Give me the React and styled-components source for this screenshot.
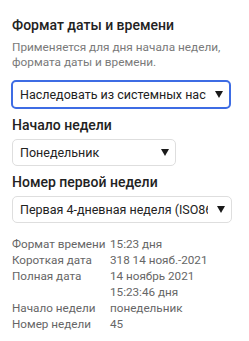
import React from "react";
import styled, { createGlobalStyle } from "styled-components";

const Global = createGlobalStyle`
    body {
        margin: 0;
        background: #ffffff;
        font-family: Roboto, "Open Sans", sans-serif;
    }
`

const Panel = styled.div`
    display: flex;
    flex-direction: column;
    padding: 16px 17px 0 12px;
    width: 249px;
    box-sizing: border-box;
`
const Title = styled.div`
    font-size: 14px;
    font-weight: 500;
    color: #222;
    line-height: 18px;
    margin-top: ${props => props.top || 0}px;
`
const Desc = styled.div`
    font-size: 11.8px;
    color: #7a7a7a;
    line-height: 14.5px;
    margin-top: 6px;
`
const Select = styled.div`
    display: flex;
    align-items: center;
    box-sizing: border-box;
    height: ${props => props.focused ? 29 : 27}px;
    width: ${props => props.width ? props.width + "px" : "100%"};
    margin-left: ${props => props.focused ? -1 : 0}px;
    margin-right: ${props => props.focused ? 0 : 1}px;
    margin-top: ${props => props.top || 5}px;
    padding: 0 6px 0 7px;
    border: ${props => props.focused ? "2px solid #3d6ce4" : "1px solid #dedede"};
    border-radius: 5px;
    background: #fff;
    font-size: 12.5px;
    color: #222;
`
const SelectText = styled.span`
    flex: 1;
    white-space: nowrap;
    overflow: hidden;
`
const Arrow = styled.span`
    flex: none;
    width: 0;
    height: 0;
    margin-left: 9px;
    border-left: 4px solid transparent;
    border-right: 4px solid transparent;
    border-top: 7px solid #1a1a1a;
`
const Info = styled.div`
    display: grid;
    grid-template-columns: 98px 1fr;
    margin-top: 13px;
    font-size: 11.7px;
    line-height: 16px;
    color: #666;
    white-space: nowrap;
`
const Value = styled.div`
    white-space: pre-line;
`

const rows = [
    ["Формат времени", "15:23 дня"],
    ["Короткая дата", "318 14 нояб.-2021"],
    ["Полная дата", "14 ноябрь 2021\n15:23:46 дня"],
    ["Начало недели", "понедельник"],
    ["Номер недели", "45"],
]

const App = () => {
    return (
        <Panel>
            <Global />
            <Title>Формат даты и времени</Title>
            <Desc>Применяется для дня начала недели, формата даты и времени.</Desc>
            <Select focused top={11}>
                <SelectText>Наследовать из системных настроек</SelectText>
                <Arrow />
            </Select>
            <Title top={7}>Начало недели</Title>
            <Select width={164}>
                <SelectText>Понедельник</SelectText>
                <Arrow />
            </Select>
            <Title top={7}>Номер первой недели</Title>
            <Select>
                <SelectText>Первая 4-дневная неделя (ISO8601)</SelectText>
                <Arrow />
            </Select>
            <Info>
                {rows.map(([k, v]) => (
                    <React.Fragment key={k}>
                        <div>{k}</div>
                        <Value>{v}</Value>
                    </React.Fragment>
                ))}
            </Info>
        </Panel>
    );
};

export default App;
